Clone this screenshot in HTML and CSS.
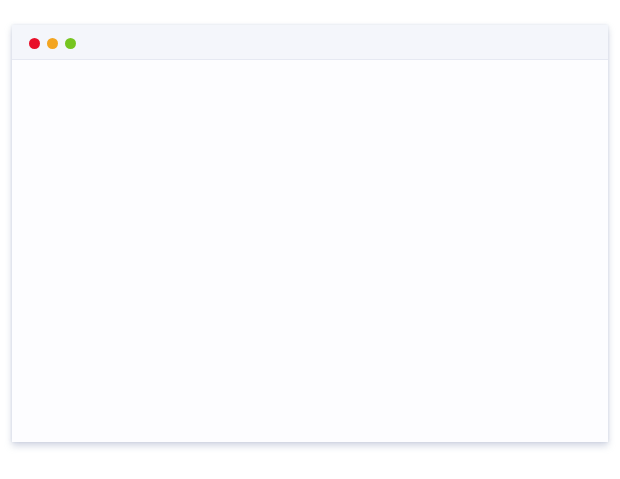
FILE: index.html
```html
<!DOCTYPE html>
<html>
<head>
<meta charset="utf-8">
<link rel="stylesheet" href="styles.css">
</head>
<body>
<div class="page">
  <div class="window">
    <div class="titlebar">
      <span class="dot red"></span>
      <span class="dot orange"></span>
      <span class="dot green"></span>
    </div>
    <div class="content"></div>
  </div>
</div>
</body>
</html>
```
FILE: styles.css
```css
html, body {
  margin: 0;
  padding: 0;
  background: #ffffff;
  font-family: "Liberation Sans", Arial, sans-serif;
}
.page {
  width: 620px;
  height: 479px;
  padding: 25px 12px 0 12px;
  box-sizing: border-box;
}
.window {
  width: 596px;
  height: 417px;
  display: flex;
  flex-direction: column;
  background: #fdfdff;
  box-shadow: 0 4px 7px rgba(150, 160, 190, 0.4), 0 0 3px rgba(170, 180, 205, 0.35);
}
.titlebar {
  height: 35px;
  flex: 0 0 35px;
  background: #f4f6fb;
  border-bottom: 1px solid #e6e9f2;
  box-sizing: border-box;
  display: flex;
  align-items: center;
  gap: 7px;
  padding-left: 17px;
  padding-top: 3px;
}
.dot {
  width: 11px;
  height: 11px;
  border-radius: 50%;
  display: block;
}
.red { background: #e8102a; }
.orange { background: #f3a521; }
.green { background: #76c520; }
.content {
  flex: 1;
  background: #fdfdff;
}
```
